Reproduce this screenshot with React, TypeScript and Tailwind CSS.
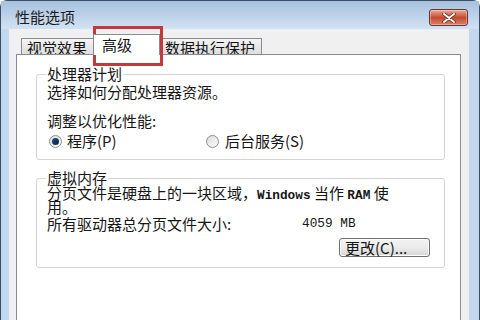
import React from "react";

function Radio({ checked }: { checked?: boolean }) {
  return (
    <span className="flex h-[13px] w-[13px] shrink-0 items-center justify-center rounded-full border border-[#8f8f8f] bg-gradient-to-br from-[#dcdcdc] to-[#fbfbfb]">
      {checked ? (
        <span className="h-[7px] w-[7px] rounded-full bg-gradient-to-br from-[#1c4f86] to-[#0b2140]" />
      ) : null}
    </span>
  );
}

function GroupBox({
  legend,
  className,
  children,
}: {
  legend: string;
  className?: string;
  children: React.ReactNode;
}) {
  return (
    <div
      className={`relative rounded-[3px] border border-[#d5d5d5] shadow-[inset_1px_1px_0_#ffffff] ${className ?? ""}`}
    >
      <span className="absolute -top-[9px] left-[9px] bg-white px-[1px] leading-[16px]">
        {legend}
      </span>
      {children}
    </div>
  );
}

export default function App() {
  return (
    <div className="relative h-[320px] w-[480px] overflow-hidden bg-white font-['Noto_Sans_CJK_SC',sans-serif] text-[15px] text-[#151515]">
      <div className="flex h-full flex-col rounded-t-[7px] border-x border-t border-[#3d4d63] bg-[#c3d7ee]">
        {/* title bar */}
        <div className="flex h-[28px] shrink-0 items-start bg-gradient-to-b from-[#a7c1de] to-[#d2e2f3]">
          <span className="ml-[14px] mt-[8px] leading-[16px] text-[#1b1b1b]">性能选项</span>
          <button
            type="button"
            className="ml-auto mr-[11px] mt-[8px] flex h-[17px] w-[39px] items-center justify-center rounded-[3px] border border-[#6e3429] bg-gradient-to-b from-[#e7aa98] via-[#c5482f] to-[#d98266] shadow-[inset_0_0_0_1px_rgba(255,255,255,0.35)]"
          >
            <svg width="14" height="10" viewBox="0 0 14 10">
              <path d="M2 1 L12 9 M12 1 L2 9" stroke="#5a1f16" strokeWidth="3.4" strokeLinecap="round" />
              <path d="M2 1 L12 9 M12 1 L2 9" stroke="#ffffff" strokeWidth="2" strokeLinecap="round" />
            </svg>
          </button>
        </div>

        {/* client area */}
        <div className="ml-[8px] mr-[10px] flex flex-1 flex-col border-l border-t border-[#e8f0f8] bg-[#f0f0f0] pl-[6px] pr-[8px]">
          {/* tabs */}
          <div className="flex h-[24px] shrink-0 items-end pl-[5px]">
            <div className="h-[16px] w-[73px] border-x border-t border-[#898c95] bg-gradient-to-b from-[#f4f4f4] to-[#dedede] pl-[5px] pt-[1px] leading-[16px]">
              视觉效果
            </div>
            <div className="relative z-10 -mb-px -ml-px h-[21px] w-[67px] border-x border-t border-[#898c95] bg-white pl-[8px] pt-[2px] leading-[16px]">
              高级
            </div>
            <div className="ml-px h-[16px] w-[101px] border-x border-t border-[#898c95] bg-gradient-to-b from-[#f4f4f4] to-[#dedede] pl-[3px] pt-[1px] leading-[16px]">
              数据执行保护
            </div>
          </div>

          {/* panel */}
          <div className="flex-1 border-x border-t border-[#898c95] bg-white pl-[19px] pr-[15px] pt-[19px]">
            <GroupBox legend="处理器计划" className="pb-[10px] pl-[10px] pt-[9px]">
              <p className="leading-[16px]">选择如何分配处理器资源。</p>
              <p className="mt-[13px] leading-[16px]">调整以优化性能:</p>
              <div className="mt-[4px] flex items-center leading-[16px]">
                <div className="flex w-[159px] items-center gap-[5px] pl-[2px]">
                  <Radio checked />
                  <span>程序(P)</span>
                </div>
                <div className="flex items-center gap-[6px]">
                  <Radio />
                  <span>后台服务(S)</span>
                </div>
              </div>
            </GroupBox>

            <GroupBox legend="虚拟内存" className="mt-[18px] pb-[10px] pl-[10px] pt-[7px]">
              <div className="leading-[14px]">
                分页文件是硬盘上的一块区域，
                <span className="font-['Liberation_Mono',monospace] text-[12.75px] font-bold leading-[0px]">Windows</span> 当作{" "}
                <span className="font-['Liberation_Mono',monospace] text-[12.75px] font-bold leading-[0px]">RAM</span> 使
              </div>
              <div className="leading-[14px]">用。</div>
              <div className="mt-[2px] flex items-center leading-[16px]">
                <span className="w-[255px]">所有驱动器总分页文件大小:</span>
                <span className="font-['Liberation_Mono',monospace] text-[12.75px]">4059 MB</span>
              </div>
              <div className="mt-[6px] flex justify-end pr-[14px]">
                <button
                  type="button"
                  className="h-[19px] w-[91px] rounded-[3px] border border-[#707070] bg-gradient-to-b from-[#f3f3f3] via-[#ebebeb] to-[#d6d6d6] pl-[5px] text-left leading-[16px] shadow-[inset_0_0_0_1px_#fcfcfc]"
                >
                  更改(C)...
                </button>
              </div>
            </GroupBox>
          </div>
        </div>
      </div>

      {/* red highlight annotation */}
      <div className="pointer-events-none absolute left-[93px] top-[26px] h-[40px] w-[70px] border-[3px] border-[#c23a3d]" />
    </div>
  );
}
